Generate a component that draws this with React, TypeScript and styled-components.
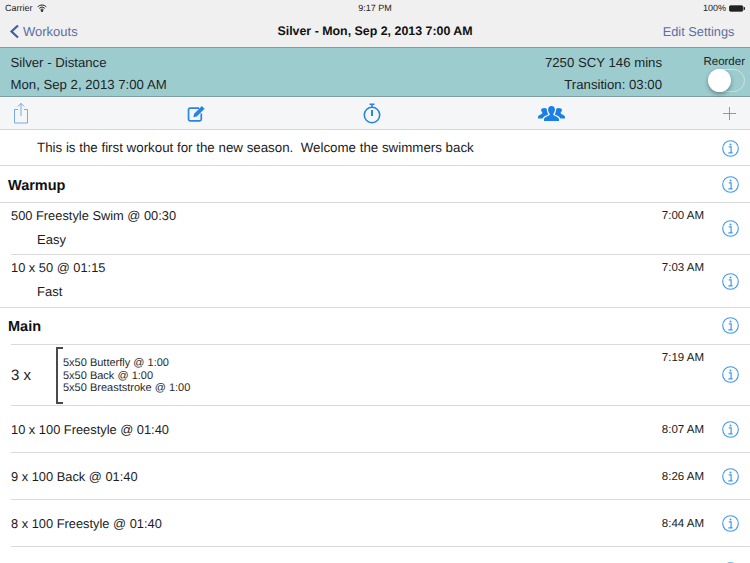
import React from "react";
import styled, { createGlobalStyle } from "styled-components";

const Global = createGlobalStyle`
  html, body { margin: 0; padding: 0; background: #fff; }
  body { width: 750px; height: 563px; overflow: hidden; font-family: "Liberation Sans", Arial, sans-serif; color: #1c1c1c; text-rendering: geometricPrecision; }
  * { box-sizing: border-box; }
`;

const Page = styled.div`
  width: 750px; height: 563px; overflow: hidden; display: flex; flex-direction: column; background: #fff;
  & > * { flex: none; }
`;
const StatusBar = styled.div`
  height: 16px; background: #f0f0f0; padding: 0 5px; display: grid; grid-template-columns: 1fr auto 1fr; align-items: center; font-size: 9px; color: #222;
`;
const StatusLeft = styled.div`display: flex; align-items: center; gap: 4px;`;
const StatusRight = styled.div`display: flex; align-items: center; justify-content: flex-end; gap: 3px;`;
const NavBar = styled.div`
  height: 32px; background: #f0f0f0; border-bottom: 1px solid #7f9ea0; display: grid; grid-template-columns: 1fr auto 1fr; align-items: center; padding: 0 0 1px; font-size: 13px;
`;
const BackLink = styled.div`display: flex; align-items: center; gap: 3px; margin-left: 9px; color: #5a6fa3;`;
const NavTitle = styled.div`font-weight: 700; color: #111; font-size: 12.4px;`;
const NavAction = styled.div`justify-self: end; margin-right: 15.5px; font-size: 12.8px; color: #5a6fa3;`;
const InfoBand = styled.div`
  height: 49px; background: #9ccccd; border-bottom: 1px solid #7f9ea0; display: flex; padding: 0 5px 0 10.5px; font-size: 13.2px; color: #202428;
`;
const InfoCol = styled.div<{ $right?: boolean }>`
  display: flex; flex-direction: column; gap: 5px; padding: 6px 0 0; line-height: 17px; ${p => p.$right ? "text-align: right; margin-left: auto;" : ""}
`;
const ReorderCol = styled.div`
  width: 64px; margin-left: 19px; padding-top: 8px; display: flex; flex-direction: column; align-items: flex-end; font-size: 11.5px; line-height: 13px;
`;
const Switch = styled.div`
  position: relative; width: 37px; height: 23px; border-radius: 12px; border: 1px solid #cfe2e2;
`;
const Knob = styled.div`
  position: absolute; left: -1px; top: -1px; width: 23px; height: 23px; border-radius: 50%; background: #fff; box-shadow: 0 2px 4px rgba(0,0,0,.35);
`;
const Toolbar = styled.div`
  height: 33px; background: #f4f6f7; border-bottom: 1px solid #c9dcdd; display: grid; grid-template-columns: 42px 308px 44px 314px 42px; align-items: center;
  & > div { display: flex; justify-content: center; align-items: center; }
`;
const Row = styled.div<{ $h: number }>`
  position: relative; height: ${p => p.$h}px; flex: none;
  &::after { content: ""; position: absolute; right: 0; bottom: 0; left: 11px; height: 1px; background: #d9d9d9; }
`;
const FullRow = styled(Row)`&::after { left: 0; }`;
const Note = styled.div`padding: 9px 0 0 37px; font-size: 13.33px; line-height: 17px;`;
const Heading = styled.div<{ $top: number }>`padding: ${p => p.$top}px 0 0 8px; font-size: 14.5px; line-height: 17px; font-weight: 700; color: #111;`;
const Title = styled.div<{ $top: number }>`padding: ${p => p.$top}px 0 0 11px; font-size: 12.85px; line-height: 17px;`;
const Sub = styled.div`padding: 7px 0 0 37px; font-size: 13px; line-height: 17px;`;
const Time = styled.div<{ $top: number }>`position: absolute; right: 46px; top: ${p => p.$top}px; font-size: 11.5px; line-height: 14px;`;
const InfoSlot = styled.div<{ $top: number }>`position: absolute; left: 722px; top: ${p => p.$top}px; line-height: 0;`;
const SetRow = styled.div`display: flex; align-items: center; height: 100%; padding: 0 0 1px 11px;`;
const SetCount = styled.div`width: 45px; font-size: 15px;`;
const Bracket = styled.div`
  width: 7px; height: 57px; border: 2px solid #4a4a4a; border-right: none;
`;
const SetItems = styled.div`margin-top: 2px; font-size: 11px; line-height: 12.7px; color: #2a2a2a;`;

const Info = () => (
  <svg width="17" height="17" viewBox="0 0 17 17" fill="none">
    <circle cx="8.5" cy="8.5" r="7.8" stroke="#3f97ec" strokeWidth="1.1" />
    <circle cx="8.5" cy="4.4" r="1" fill="#3f97ec" />
    <path d="M6.8 6.900h2.300v5.800M6.400 12.900h4.200" stroke="#3f97ec" strokeWidth="1.2" />
  </svg>
);

const Share = () => (
  <svg width="16" height="22" viewBox="0 0 16 22" fill="none" stroke="#76abdf" strokeWidth="1">
    <path d="M5 7.500H1.500v13.500h13V7.500H11M8 14V1.500M4.800 4.500 8 1.300l3.200 3.200" />
  </svg>
);
const Edit = () => (
  <svg width="19" height="17" viewBox="0 0 17 16" fill="none">
    <path d="M11 3H2.500C1.600 3 1 3.600 1 4.500v9c0 .9.6 1.500 1.500 1.500h9c.9 0 1.500-.6 1.500-1.500V8" stroke="#2a85e0" strokeWidth="1.600" />
    <path d="M5.500 11.500 6.300 8.300 13.500 1l2.600 2.600-7.300 7.200z" fill="#2a85e0" />
  </svg>
);
const Timer = () => (
  <svg width="18" height="21" viewBox="0 0 18 21" fill="none" stroke="#2a85e0">
    <circle cx="9" cy="12" r="7.700" strokeWidth="1.600" />
    <path d="M6.500 1.200h5M9 1.500v2.500" strokeWidth="1.600" />
    <path d="M9 7v6" strokeWidth="2" />
  </svg>
);
const Group = () => (
  <svg width="27" height="17" viewBox="0 0 27 17" fill="#1a7fe6">
    <path d="M13.500 1c2.400 0 3.600 1.800 3.400 4-.1 1.500-.8 2.800-1.600 3.700-.3 1 .2 1.500 1.400 2 2.200.9 3.800 1.700 4.300 3.300V16H6v-2c.5-1.600 2.100-2.400 4.300-3.300 1.200-.5 1.700-1 1.400-2-.8-.9-1.500-2.200-1.600-3.700-.2-2.200 1-4 3.400-4z" />
    <path d="M6.500 3c1 0 1.800.4 2.300 1.100-.1 1.700.4 3.500 1.300 4.800 0 .5-.3.8-1 1.100C6.800 11 5.300 11.900 4.500 13.500H0v-1.700c.4-1.200 1.700-1.900 3.300-2.600.9-.4 1.200-.8 1-1.600C3.600 6.900 3.100 5.800 3 4.800 3 3.900 4.600 3 6.500 3zM20.500 3c1.900 0 3.500.9 3.500 1.800-.1 1-.6 2.100-1.300 2.800-.2.8.1 1.200 1 1.600 1.600.7 2.900 1.400 3.300 2.600v1.700h-4.500c-.8-1.600-2.300-2.500-4.600-3.500-.7-.3-1-.6-1-1.100.9-1.300 1.400-3.100 1.300-4.800.5-.7 1.300-1.100 2.300-1.100z" />
  </svg>
);
const Plus = () => (
  <svg width="13" height="13" viewBox="0 0 13 13" fill="none" stroke="#5aa5ee" strokeWidth="1">
    <path d="M6.500 0v13M0 6.500h13" />
  </svg>
);

const App = () => (
  <Page>
    <Global />
    <StatusBar>
      <StatusLeft>
        Carrier
        <svg width="10" height="8" viewBox="0 0 10 8" fill="none" stroke="#222">
          <path d="M.7 2.800a6 6 0 0 1 8.600 0M2.200 4.300a4 4 0 0 1 5.600 0M3.600 5.700a2 2 0 0 1 2.800 0" />
          <path d="M5 7.800 4 6.700h2z" fill="#222" />
        </svg>
      </StatusLeft>
      <div>9:17 PM</div>
      <StatusRight>
        100%
        <svg width="16" height="7" viewBox="0 0 18 7">
          <rect x=".5" y=".5" width="15" height="6" rx="1" fill="#222" stroke="#222" />
          <rect x="16.500" y="2" width="1.500" height="3" fill="#222" />
        </svg>
      </StatusRight>
    </StatusBar>
    <NavBar>
      <BackLink>
        <svg width="11" height="15" viewBox="0 0 11 15" fill="none" stroke="#3f5f9f" strokeWidth="2.200">
          <path d="M9 1.500 2.500 7.500 9 13.500" />
        </svg>
        Workouts
      </BackLink>
      <NavTitle>Silver - Mon, Sep 2, 2013 7:00 AM</NavTitle>
      <NavAction>Edit Settings</NavAction>
    </NavBar>
    <InfoBand>
      <InfoCol>
        <div>Silver - Distance</div>
        <div>Mon, Sep 2, 2013 7:00 AM</div>
      </InfoCol>
      <InfoCol $right>
        <div>7250 SCY 146 mins</div>
        <div>Transition: 03:00</div>
      </InfoCol>
      <ReorderCol>
        Reorder
        <Switch><Knob /></Switch>
      </ReorderCol>
    </InfoBand>
    <Toolbar>
      <div><Share /></div>
      <div><Edit /></div>
      <div><Timer /></div>
      <div><Group /></div>
      <div><Plus /></div>
    </Toolbar>
    <FullRow $h={36}>
      <Note>This is the first workout for the new season.&nbsp; Welcome the swimmers back</Note>
      <InfoSlot $top={10}><Info /></InfoSlot>
    </FullRow>
    <FullRow $h={37}>
      <Heading $top={12}>Warmup</Heading>
      <InfoSlot $top={10}><Info /></InfoSlot>
    </FullRow>
    <Row $h={52}>
      <Title $top={4}>500 Freestyle Swim @ 00:30</Title>
      <Sub>Easy</Sub>
      <Time $top={6}>7:00 AM</Time>
      <InfoSlot $top={17}><Info /></InfoSlot>
    </Row>
    <FullRow $h={53}>
      <Title $top={4}>10 x 50 @ 01:15</Title>
      <Sub>Fast</Sub>
      <Time $top={6}>7:03 AM</Time>
      <InfoSlot $top={18}><Info /></InfoSlot>
    </FullRow>
    <Row $h={37}>
      <Heading $top={11}>Main</Heading>
      <InfoSlot $top={9}><Info /></InfoSlot>
    </Row>
    <Row $h={61}>
      <SetRow>
        <SetCount>3 x</SetCount>
        <Bracket />
        <SetItems>
          <div>5x50 Butterfly @ 1:00</div>
          <div>5x50 Back @ 1:00</div>
          <div>5x50 Breaststroke @ 1:00</div>
        </SetItems>
      </SetRow>
      <Time $top={6}>7:19 AM</Time>
      <InfoSlot $top={21}><Info /></InfoSlot>
    </Row>
    <Row $h={47}>
      <Title $top={15}>10 x 100 Freestyle @ 01:40</Title>
      <Time $top={17}>8:07 AM</Time>
      <InfoSlot $top={15}><Info /></InfoSlot>
    </Row>
    <Row $h={47}>
      <Title $top={15}>9 x 100 Back @ 01:40</Title>
      <Time $top={17}>8:26 AM</Time>
      <InfoSlot $top={15}><Info /></InfoSlot>
    </Row>
    <Row $h={47}>
      <Title $top={15}>8 x 100 Freestyle @ 01:40</Title>
      <Time $top={17}>8:44 AM</Time>
      <InfoSlot $top={15}><Info /></InfoSlot>
    </Row>
    <Row $h={47}>
      <InfoSlot $top={15}><Info /></InfoSlot>
    </Row>
  </Page>
);

export default App;
